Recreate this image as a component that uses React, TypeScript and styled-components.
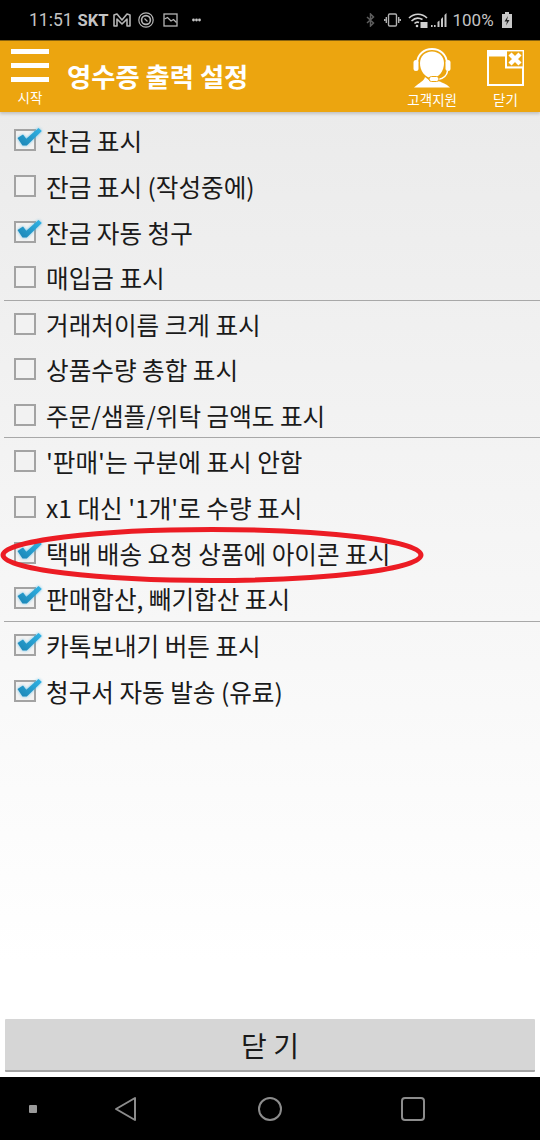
import React from 'react';
import styled, { createGlobalStyle } from 'styled-components';

const FONT = `'Noto Sans CJK KR', 'Noto Sans', sans-serif`;

type Option = { label: string; checked: boolean; dividerAfter?: boolean; highlighted?: boolean };

const options: Option[] = [
  { label: '잔금 표시', checked: true },
  { label: '잔금 표시 (작성중에)', checked: false },
  { label: '잔금 자동 청구', checked: true },
  { label: '매입금 표시', checked: false, dividerAfter: true },
  { label: '거래처이름 크게 표시', checked: false },
  { label: '상품수량 총합 표시', checked: false },
  { label: '주문/샘플/위탁 금액도 표시', checked: false, dividerAfter: true },
  { label: "'판매'는 구분에 표시 안함", checked: false },
  { label: "x1 대신 '1개'로 수량 표시", checked: false },
  { label: '택배 배송 요청 상품에 아이콘 표시', checked: true, highlighted: true },
  { label: '판매합산, 빼기합산 표시', checked: true, dividerAfter: true },
  { label: '카톡보내기 버튼 표시', checked: true },
  { label: '청구서 자동 발송 (유료)', checked: true },
];

const Checkbox: React.FC<{ checked: boolean }> = ({ checked }) => (
  <Box>
    {checked && (
      <CheckMark viewBox="0 -4 30 22">
        <defs>
          <linearGradient id="checkFill" x1="0" y1="1" x2="1" y2="0">
            <stop offset="0" stopColor="#1c84b4" />
            <stop offset="1" stopColor="#2fb4e6" />
          </linearGradient>
        </defs>
        <path d="M3.5 9 L9 5.5 L12.3 9.8 L24.5 -1 L27.8 2 L12.8 16.5 L8.5 16.5 Z" fill="url(#checkFill)" />
      </CheckMark>
    )}
  </Box>
);

export default function App() {
  return (
    <>
      <GlobalStyle />
      <Screen>
        <StatusBar>
          <Clock>11:51</Clock>
          <Carrier>SKT</Carrier>
          <StatusIcon $gap={5} width="18" height="14" viewBox="0 0 18 14" fill="none" stroke="#b5b5b5" strokeWidth="1.6" strokeLinejoin="round">
            <path d="M1 13 V2 L4 1 L9 7 L14 1 L17 2 V13 H14 V6 L9 11 L4 6 V13 Z" />
          </StatusIcon>
          <StatusIcon $gap={7} width="16" height="16" viewBox="0 0 16 16" fill="none" stroke="#b5b5b5" strokeWidth="1.2">
            <circle cx="8" cy="8" r="7.2" />
            <circle cx="8" cy="8" r="4.4" strokeWidth="1.6" />
            <path d="M6.5 6.5 L9.5 9.5" />
          </StatusIcon>
          <StatusIcon $gap={9} width="15" height="14" viewBox="0 0 15 14" fill="none" stroke="#b5b5b5" strokeWidth="1.3">
            <rect x="1" y="1" width="13" height="12" />
            <path d="M1.5 6 L4.5 4.5 L8 8 L10.5 6.5 L13.5 9.5" />
          </StatusIcon>
          <StatusIcon $gap={14} width="9" height="4" viewBox="0 0 9 4" fill="#c4c4c4">
            <circle cx="1.5" cy="2" r="1.4" />
            <circle cx="4.5" cy="2" r="1.4" />
            <circle cx="7.5" cy="2" r="1.4" />
          </StatusIcon>
          <StatusIcon $gap={165} width="9" height="14" viewBox="0 0 9 14" fill="none" stroke="#5e5e5e" strokeWidth="1.5">
            <path d="M1 4 L7.5 10 L4.5 13 V1 L7.5 4 L1 10" />
          </StatusIcon>
          <StatusIcon $gap={9} width="17" height="14" viewBox="0 0 17 14" fill="none" stroke="#b0b0b0" strokeWidth="1.4">
            <rect x="4.5" y="1" width="8" height="12" rx="1.2" />
            <path d="M2.3 4 V10 M14.7 4 V10 M0.7 6 V8 M16.3 6 V8" />
          </StatusIcon>
          <StatusIcon $gap={7} width="20" height="15" viewBox="0 0 20 15" fill="none" stroke="#d0d0d0" strokeWidth="1.6">
            <path d="M1 5 C6 0 14 0 19 5 M3.5 8 C7 4.5 11 4.5 14.5 6.5 M6.5 10.5 C8 9 10 9 11 9.5" />
            <circle cx="9" cy="13" r="1.3" fill="#d0d0d0" stroke="none" />
            <rect x="12.5" y="9" width="7" height="6" fill="#d0d0d0" stroke="none" />
          </StatusIcon>
          <StatusIcon $gap={3} width="16" height="14" viewBox="0 0 16 14" fill="#c8c8c8">
            <rect x="0" y="12" width="1.6" height="2" />
            <rect x="3" y="12" width="1.6" height="2" />
            <path d="M6.5 9 L8.5 7.5 V14 H6.5 Z" />
            <path d="M10 6 L12 4 V14 H10 Z" />
            <path d="M13.5 2 L15.5 0 V14 H13.5 Z" />
          </StatusIcon>
          <Battery>100%</Battery>
          <StatusIcon $gap={8} width="10" height="16" viewBox="0 0 10 16">
            <path d="M3 0 H7 V2 H10 V16 H0 V2 H3 Z" fill="#c8c8c8" />
            <path d="M6 4 L2.5 9.5 H5 L4 13.5 L7.5 8 H5 Z" fill="#222" />
          </StatusIcon>
        </StatusBar>

        <Header>
          <StartButton>
            <MenuBars>
              <span />
              <span />
              <span />
            </MenuBars>
            <IconLabel>시작</IconLabel>
          </StartButton>
          <Title>영수증 출력 설정</Title>
          <HeaderActions>
            <SupportAction>
              <svg width="38" height="41" viewBox="0 0 38 41">
                <path d="M4 17 C4 -3 34 -3 34 17" fill="none" stroke="#fff" strokeWidth="2" />
                <path d="M19 4.5 C26 4.5 31 9.5 31 16 C31 24 26 31 19 31 C12 31 7 24 7 16 C7 9.5 12 4.5 19 4.5 Z" fill="#fff" />
                <rect x="0.5" y="13" width="5" height="11" rx="2.5" fill="#fff" />
                <rect x="32.5" y="13" width="5" height="11" rx="2.5" fill="#fff" />
                <path d="M34.5 24 C34 29 30 31.5 25 32.5" fill="none" stroke="#fff" strokeWidth="1.5" />
                <path d="M12 30 C11 34 6 36 1 40.5 H37 C33 36.5 29 36 27 34.5 L16 33 Z" fill="#fff" />
                <rect x="16" y="29.5" width="10" height="5" rx="2.5" fill="#fff" stroke="#eca50f" strokeWidth="1" />
              </svg>
              <IconLabel>고객지원</IconLabel>
            </SupportAction>
            <CloseAction>
              <svg width="37" height="36" viewBox="0 0 37 36">
                <rect x="0" y="0" width="37" height="36" fill="#fff" />
                <path d="M2 6.5 H18 V18.5 H35 V34 H2 Z" fill="#eca50f" />
                <rect x="20" y="1.4" width="15.6" height="15" fill="#eca50f" />
                <path d="M23 4 L33 14 M33 4 L23 14" stroke="#fff" strokeWidth="4.4" />
              </svg>
              <IconLabel>닫기</IconLabel>
            </CloseAction>
          </HeaderActions>
        </Header>

        <Content>
          <OptionList>
            {options.map((option) => (
              <OptionRow key={option.label} $divider={option.dividerAfter}>
                <Checkbox checked={option.checked} />
                <OptionLabel>{option.label}</OptionLabel>
                {option.highlighted && (
                  <Highlight viewBox="0 0 424 58">
                    <ellipse cx="212" cy="29" rx="209" ry="25.5" fill="none" stroke="#ec1c24" strokeWidth="5" />
                  </Highlight>
                )}
              </OptionRow>
            ))}
          </OptionList>
          <CloseButton>닫 기</CloseButton>
        </Content>

        <NavBar>
          <NavDot />
          <NavIcon $gap={77} width="24" height="26" viewBox="0 0 24 26" fill="none" stroke="#8c8c8c" strokeWidth="2" strokeLinejoin="round">
            <path d="M21 2 V24 L2 13 Z" />
          </NavIcon>
          <NavIcon $gap={119} width="26" height="26" viewBox="0 0 26 26" fill="none" stroke="#8c8c8c" strokeWidth="2">
            <circle cx="13" cy="13" r="11" />
          </NavIcon>
          <NavIcon $gap={117} width="26" height="26" viewBox="0 0 26 26" fill="none" stroke="#8c8c8c" strokeWidth="2">
            <rect x="2" y="2" width="22" height="22" rx="3" />
          </NavIcon>
        </NavBar>
      </Screen>
    </>
  );
}

const GlobalStyle = createGlobalStyle`
  html, body {
    margin: 0;
    padding: 0;
    background: #000000;
  }

  * {
    box-sizing: border-box;
  }
`;

const Screen = styled.div`
  display: flex;
  flex-direction: column;
  width: 540px;
  height: 1140px;
  overflow: hidden;
  font-family: ${FONT};
`;

const StatusBar = styled.div`
  display: flex;
  align-items: center;
  height: 41px;
  padding-left: 29px;
  background: #000000;
  color: #c4c4c4;
  border-bottom: 1px solid #8a6410;
`;

const StatusIcon = styled.svg<{ $gap: number }>`
  flex: none;
  margin-left: ${(props) => props.$gap}px;
`;

const Clock = styled.span`
  font-family: Roboto, sans-serif;
  font-size: 17.5px;
`;

const Carrier = styled.span`
  margin-left: 5px;
  font-family: Roboto, sans-serif;
  font-size: 16.5px;
  font-weight: 700;
`;

const Battery = styled.span`
  margin-left: 5px;
  font-family: Roboto, sans-serif;
  font-size: 17px;
`;

const Header = styled.header`
  display: flex;
  align-items: stretch;
  height: 71px;
  padding: 0 16px 0 11px;
  background: #eca50f;
  color: #ffffff;
  box-shadow: 0 2px 3px rgba(0, 0, 0, 0.18);
  position: relative;
  z-index: 1;
`;

const StartButton = styled.div`
  display: flex;
  flex-direction: column;
  align-items: center;
  width: 38px;
  padding-top: 8px;
`;

const MenuBars = styled.div`
  display: flex;
  flex-direction: column;
  gap: 9px;
  width: 38px;
  margin-bottom: 7px;

  span {
    display: block;
    height: 5px;
    background: #ffffff;
  }
`;

const IconLabel = styled.span`
  font-size: 13.5px;
  line-height: 16px;
  color: #ffffff;
  white-space: nowrap;
`;

const Title = styled.h1`
  margin: 0 0 0 18px;
  font-size: 26.3px;
  font-weight: 700;
  line-height: 70px;
`;

const HeaderActions = styled.div`
  display: flex;
  margin-left: auto;
  gap: 30px;
`;

const HeaderAction = styled.div`
  display: flex;
  flex-direction: column;
  align-items: center;
`;

const SupportAction = styled(HeaderAction)`
  padding-top: 6px;
  gap: 3px;
`;

const CloseAction = styled(HeaderAction)`
  padding-top: 9px;
  gap: 5px;
`;

const Content = styled.main`
  flex: 1;
  display: flex;
  flex-direction: column;
  padding-top: 5px;
  background: linear-gradient(#ebebeb, #ffffff 88%);
`;

const OptionList = styled.ul`
  flex: 1;
  margin: 0;
  padding: 0;
  list-style: none;
`;

const OptionRow = styled.li<{ $divider?: boolean }>`
  position: relative;
  display: flex;
  align-items: center;
  gap: 10px;
  height: 45.9px;
  margin-left: 4px;
  padding-left: 10px;
  border-bottom: ${(props) => (props.$divider ? '1px solid #a8a8a8' : 'none')};
`;

const Box = styled.span`
  position: relative;
  flex: none;
  width: 22px;
  height: 22px;
  border: 2px solid #a3a3a3;
  background: #f2f2f2;
`;

const CheckMark = styled.svg`
  position: absolute;
  left: -2px;
  top: -6px;
  width: 30px;
  height: 22px;
  overflow: visible;
  filter: drop-shadow(0 0 1.5px rgba(70, 180, 230, 0.75));
`;

const OptionLabel = styled.span`
  font-size: 24.6px;
  line-height: 30px;
  color: #1a1a1a;
  white-space: nowrap;
`;

const Highlight = styled.svg`
  position: absolute;
  left: -4px;
  top: -4px;
  width: 424px;
  height: 58px;
  pointer-events: none;
`;

const CloseButton = styled.button`
  flex: none;
  align-self: center;
  width: 530px;
  height: 53px;
  margin-bottom: 5px;
  border: none;
  border-bottom: 2px solid #a3a3a3;
  border-radius: 1px;
  background: #d6d6d6;
  font-family: ${FONT};
  font-size: 28px;
  color: #1a1a1a;
`;

const NavBar = styled.nav`
  flex: none;
  display: flex;
  align-items: center;
  height: 63px;
  padding-left: 29px;
  background: #000000;
`;

const NavDot = styled.span`
  display: block;
  flex: none;
  width: 8px;
  height: 8px;
  border-radius: 1px;
  background: #9a9a9a;
`;

const NavIcon = styled.svg<{ $gap: number }>`
  flex: none;
  margin-left: ${(props) => props.$gap}px;
`;
